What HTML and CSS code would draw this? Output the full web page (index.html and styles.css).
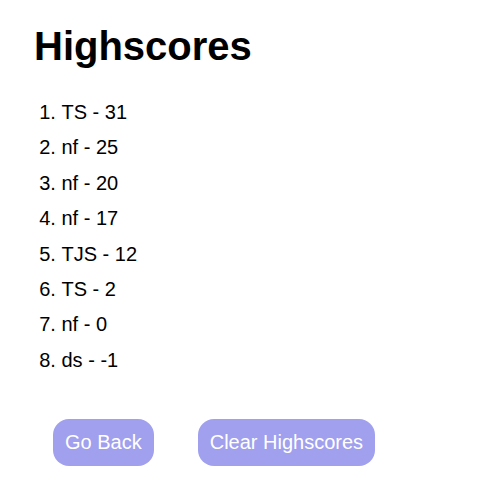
FILE: index.html
```html
<!DOCTYPE html>
<html lang="en">
<head>
<meta charset="utf-8">
<title>Highscores</title>
<link rel="stylesheet" href="styles.css">
</head>
<body>
<main class="page">
  <h1 class="title">Highscores</h1>
  <ol class="scores">
    <li>TS - 31</li>
    <li>nf - 25</li>
    <li>nf - 20</li>
    <li>nf - 17</li>
    <li>TJS - 12</li>
    <li>TS - 2</li>
    <li>nf - 0</li>
    <li>ds - -1</li>
  </ol>
  <div class="actions">
    <button class="btn" type="button">Go Back</button>
    <button class="btn" type="button">Clear Highscores</button>
  </div>
</main>
</body>
</html>
```
FILE: styles.css
```css
html, body {
  margin: 0;
  padding: 0;
  background: #ffffff;
}

body {
  font-family: "Liberation Sans", Arial, sans-serif;
  color: #000000;
}

.page {
  padding: 23px 0 0 34px;
}

.title {
  margin: 0;
  font-size: 40px;
  font-weight: bold;
  line-height: 46px;
}

.scores {
  margin: 32px 0 0 0;
  padding-left: 27.5px;
  font-size: 20px;
  line-height: 23px;
}

.scores li {
  margin-bottom: 12.4px;
}

.scores li:last-child {
  margin-bottom: 0;
}

.actions {
  display: flex;
  gap: 44px;
  margin: 47px 0 0 19px;
}

.btn {
  font-family: "Liberation Sans", Arial, sans-serif;
  font-size: 20px;
  line-height: 23px;
  color: #ffffff;
  background: #a0a0ee;
  border: none;
  border-radius: 16px;
  padding: 12px 12px;
  cursor: pointer;
}
```
